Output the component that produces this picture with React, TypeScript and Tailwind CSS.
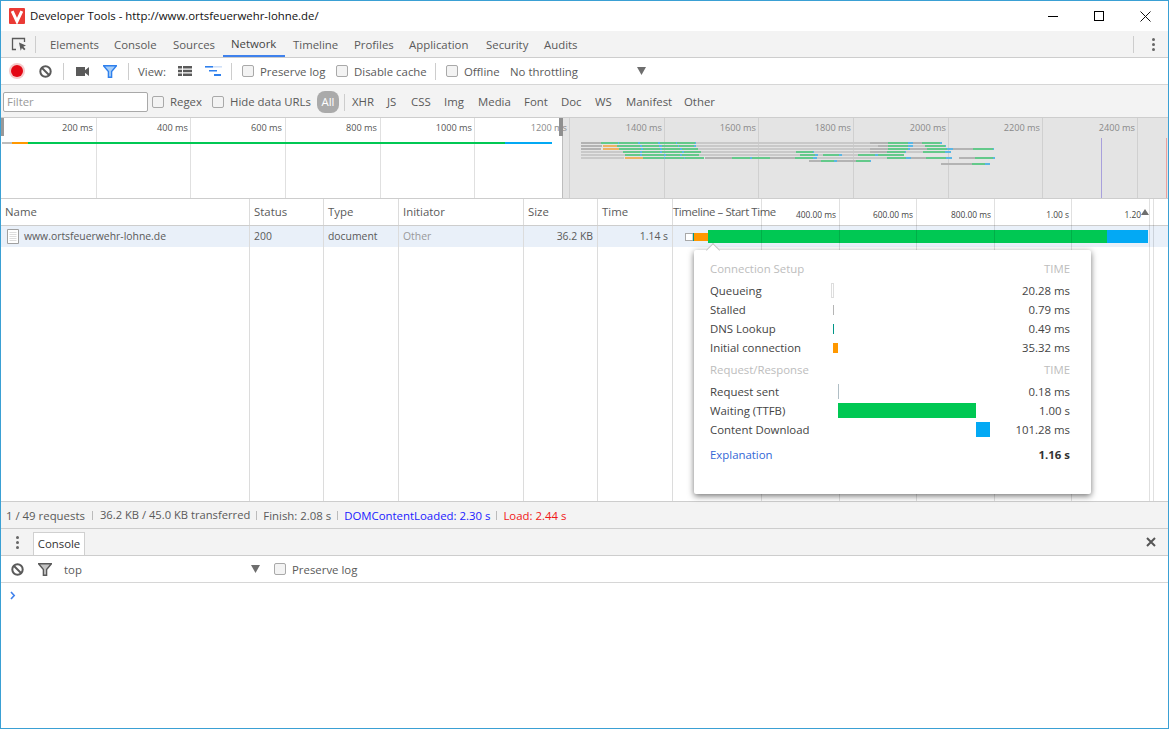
import type { ReactNode } from "react"

const mainTabs: [string, string][] = [
  ["Elements", "w-[64px]"],
  ["Console", "w-[59px]"],
  ["Sources", "w-[58px]"],
  ["Network", "w-[62px]"],
  ["Timeline", "w-[61px]"],
  ["Profiles", "w-[55px]"],
  ["Application", "w-[77px]"],
  ["Security", "w-[58px]"],
  ["Audits", "w-[58px]"],
]

const typeFilters: [string, string][] = [
  ["XHR", "w-[35px]"],
  ["JS", "w-[24px]"],
  ["CSS", "w-[33px]"],
  ["Img", "w-[34px]"],
  ["Media", "w-[46px]"],
  ["Font", "w-[37px]"],
  ["Doc", "w-[34px]"],
  ["WS", "w-[31px]"],
  ["Manifest", "w-[58px]"],
  ["Other", "w-[45px]"],
]

const overviewLabels = [
  ["200 ms", 92], ["400 ms", 187], ["600 ms", 281], ["800 ms", 376], ["1000 ms", 471], ["1200 ms", 566],
  ["1400 ms", 661], ["1600 ms", 755], ["1800 ms", 850], ["2000 ms", 945], ["2200 ms", 1039], ["2400 ms", 1134],
] as const

const overviewLines = [96, 190, 285, 380, 474, 569, 664, 758, 853, 948, 1042, 1137]

const g = "#b3b3b3"
const l = "#c9c9c9"
const G = "#63c98a"
const b = "#5ab6e4"
const o = "#ecb262"

// [colour, from, to] per waterfall row, in page pixels
const overviewRows: [string, number, number][][] = [
  [[g, 581, 601], [G, 601, 618], [b, 618, 619], [G, 619, 638], [b, 638, 640], [G, 640, 658], [b, 658, 660], [G, 660, 676], [b, 676, 677], [G, 677, 695], [b, 695, 696], [l, 696, 870], [g, 870, 888], [G, 888, 908], [b, 908, 913], [g, 913, 922], [G, 922, 940], [b, 940, 942]],
  [[g, 581, 602], [o, 603, 617], [G, 617, 640], [b, 640, 642], [G, 642, 659], [b, 659, 662], [G, 662, 678], [b, 678, 679], [G, 679, 694], [b, 694, 696], [l, 696, 878], [g, 878, 888], [G, 888, 908], [b, 908, 913], [l, 913, 925], [G, 925, 945], [b, 945, 946]],
  [[g, 581, 601], [o, 603, 619], [G, 619, 641], [b, 641, 643], [G, 643, 660], [b, 660, 662], [G, 662, 680], [b, 680, 682], [G, 682, 698], [l, 698, 870], [g, 870, 888], [G, 888, 908], [b, 908, 910], [g, 910, 927], [G, 927, 947], [b, 947, 953], [g, 953, 973], [G, 973, 993], [b, 993, 994]],
  [[l, 581, 623], [G, 623, 640], [b, 640, 642], [G, 642, 660], [b, 660, 662], [G, 662, 682], [b, 682, 684], [G, 684, 701], [l, 701, 796], [G, 796, 813], [b, 813, 814], [l, 814, 870], [g, 870, 887], [G, 887, 905], [b, 905, 906], [l, 906, 923], [G, 923, 945], [b, 945, 951]],
  [[l, 581, 625], [G, 625, 640], [b, 640, 642], [G, 642, 664], [b, 664, 666], [G, 666, 680], [b, 680, 682], [G, 682, 699], [l, 699, 800], [G, 800, 815], [b, 815, 818], [l, 818, 823], [G, 823, 839], [b, 839, 842], [l, 842, 858], [G, 858, 875], [b, 875, 878], [G, 878, 904]],
  [[l, 581, 624], [o, 625, 643], [G, 643, 664], [b, 664, 665], [G, 665, 684], [b, 684, 685], [G, 685, 704], [g, 705, 732], [G, 732, 750], [b, 750, 752], [G, 752, 770], [g, 770, 795], [G, 795, 813], [b, 813, 817], [l, 817, 887], [G, 887, 906], [b, 906, 911], [g, 911, 926], [G, 926, 946], [b, 946, 952], [g, 959, 975], [G, 975, 993], [b, 993, 995]],
  [[g, 809, 821], [G, 821, 834], [b, 834, 837], [g, 837, 856], [G, 856, 870], [b, 870, 871]],
  [[g, 941, 972], [G, 972, 985], [b, 985, 990]],
]

const rulerLabels = [
  ["400.00 ms", 835], ["600.00 ms", 912], ["800.00 ms", 990], ["1.00 s", 1068], ["1.20", 1140],
] as const

const rulerLines = [761, 839, 916, 994, 1071, 1149, 1153]

function Chk() {
  return <span className="block w-[12px] h-[12px] shrink-0 rounded-[2px] border border-[#a9a9a9] bg-[#f3f3f3]" />
}

function Sep({ className }: { className: string }) {
  return <span className={"block w-px h-[17px] shrink-0 bg-[#cdcdcd] " + className} />
}

function BlockIcon() {
  return (
    <svg width="13" height="13" viewBox="0 0 13 13" className="shrink-0">
      <circle cx="6.5" cy="6.5" r="5.2" fill="none" stroke="#5a5a5a" strokeWidth="2" />
      <path d="M3 3l7 7" stroke="#5a5a5a" strokeWidth="2" />
    </svg>
  )
}

function Arrow() {
  return (
    <svg width="9" height="8" viewBox="0 0 9 8" className="shrink-0">
      <path d="M0 0h9L4.5 8z" fill="#6e6e6e" />
    </svg>
  )
}

function TitleBar() {
  return (
    <div className="flex items-center h-[30px] shrink-0 bg-white text-[#111]">
      <svg width="16" height="16" viewBox="0 0 16 16" className="ml-[8px] shrink-0">
        <rect width="16" height="16" rx="1" fill="#ea3a35" />
        <path d="M3.2 3.2l4.8 10.2 4.8-10.2" fill="none" stroke="#fff" strokeWidth="3" />
      </svg>
      <span className="ml-[5px] text-[11.4px] whitespace-nowrap">Developer Tools - http://www.ortsfeuerwehr-lohne.de/</span>
      <div className="ml-auto flex items-center">
        <div className="w-[46px] h-[30px] flex items-center justify-center">
          <span className="block w-[10px] h-px bg-black" />
        </div>
        <div className="w-[46px] h-[30px] flex items-center justify-center">
          <span className="block w-[10px] h-[10px] border border-black" />
        </div>
        <div className="w-[46px] h-[30px] flex items-center justify-center">
          <svg width="11" height="11" viewBox="0 0 11 11">
            <path d="M.5.5l10 10M10.5.5l-10 10" stroke="#111" strokeWidth="1" />
          </svg>
        </div>
      </div>
    </div>
  )
}

function MainTabs() {
  return (
    <div className="flex items-center h-[27px] shrink-0 bg-[#f3f3f3] border-b border-[#cdcdcd]">
      <div className="w-[34px] flex justify-center">
        <svg width="16" height="16" viewBox="0 0 16 16" className="ml-[2px]">
          <path d="M5 13.5H1.5v-11h12V6" fill="none" stroke="#5a5a5a" strokeWidth="1.3" />
          <path d="M8 6.5l7 3-2.7 1.2 2.2 2.3-1.3 1.3-2.3-2.2-1.2 2.7z" fill="#5a5a5a" />
        </svg>
      </div>
      <Sep className="" />
      <div className="ml-[6px] flex h-full">
        {mainTabs.map(([name, width]) => (
          <div
            key={name}
            className={
              "h-[26px] pl-[8px] pt-[2px] flex items-center text-[11.4px] whitespace-nowrap " +
              width +
              (name === "Network" ? " border-b-2 border-[#3f81ec] text-[#444]" : " text-[#5a5a5a]")
            }
          >
            {name}
          </div>
        ))}
      </div>
      <Sep className="ml-auto mr-[18px]" />
      <div className="mr-[13px] flex flex-col gap-[2px]">
        <span className="block w-[3px] h-[3px] rounded-full bg-[#666]" />
        <span className="block w-[3px] h-[3px] rounded-full bg-[#666]" />
        <span className="block w-[3px] h-[3px] rounded-full bg-[#666]" />
      </div>
    </div>
  )
}

function NetworkToolbar() {
  return (
    <div className="flex items-center h-[27px] shrink-0 bg-white border-b border-[#d6d6d6] text-[11.4px] text-[#5a5a5a] whitespace-nowrap">
      <svg width="16" height="16" viewBox="0 0 16 16" className="ml-[8px] shrink-0">
        <circle cx="8" cy="8" r="8" fill="#f6c9c9" />
        <circle cx="8" cy="8" r="6" fill="#e30613" />
      </svg>
      <span className="ml-[14px] block">
        <BlockIcon />
      </span>
      <Sep className="ml-[11px]" />
      <svg width="13" height="9" viewBox="0 0 13 9" className="ml-[12px] shrink-0">
        <path d="M0 0h9v9H0zM9 3.2L13 0v9L9 5.8z" fill="#5a5a5a" />
      </svg>
      <svg width="14" height="13" viewBox="0 0 14 13" className="ml-[14px] shrink-0">
        <path d="M.5.8h13L8.6 6.6v5.6H5.4V6.6z" fill="#a6cdf7" stroke="#2f80ed" strokeWidth="1.4" />
      </svg>
      <Sep className="ml-[11px]" />
      <span className="ml-[9px] w-[40px] pt-[2px]">View:</span>
      <svg width="14" height="10" viewBox="0 0 14 10" className="shrink-0">
        <path d="M0 0h4v2.6H0zM5 0h9v2.6H5zM0 3.7h4v2.6H0zM5 3.7h9v2.6H5zM0 7.4h4V10H0zM5 7.4h9V10H5z" fill="#5a5a5a" />
      </svg>
      <svg width="17" height="11" viewBox="0 0 17 11" className="ml-[13px] shrink-0">
        <path d="M0 0h8v1.6H0z" fill="#2f80ed" />
        <path d="M8 0h9v1.6H8z" fill="#cfe0f8" />
        <path d="M4 4h8v1.6H4zM9 8h7v2H9z" fill="#2f80ed" />
      </svg>
      <Sep className="ml-[9px]" />
      <span className="ml-[10px] block">
        <Chk />
      </span>
      <span className="ml-[6px] w-[76px] pt-[2px]">Preserve log</span>
      <Chk />
      <span className="ml-[6px] w-[81px] pt-[2px]">Disable cache</span>
      <Sep className="" />
      <span className="ml-[10px] block">
        <Chk />
      </span>
      <span className="ml-[6px] w-[46px] pt-[2px]">Offline</span>
      <span className="w-[127px] pt-[2px]">No throttling</span>
      <Arrow />
    </div>
  )
}

function FilterBar() {
  return (
    <div className="flex items-center h-[33px] shrink-0 pt-[2px] bg-[#f3f3f3] border-b border-[#cdcdcd] text-[11.4px] text-[#5a5a5a] whitespace-nowrap">
      <div className="ml-[2px] w-[145px] h-[20px] flex items-center px-[3px] bg-white border border-[#a9a9a9] rounded-[2px] text-[#9a9a9a]">
        Filter
      </div>
      <span className="ml-[4px] block">
        <Chk />
      </span>
      <span className="ml-[6px] w-[42px]">Regex</span>
      <Chk />
      <span className="ml-[6px] w-[87px]">Hide data URLs</span>
      <span className="w-[22px] h-[22px] rounded-[8px] bg-[#aaaaaa] text-white flex items-center justify-center">All</span>
      <Sep className="ml-[5px]" />
      <div className="ml-[7px] flex">
        {typeFilters.map(([name, width]) => (
          <span key={name} className={"block " + width}>
            {name}
          </span>
        ))}
      </div>
    </div>
  )
}

function Overview() {
  return (
    <div className="relative flex h-[81px] shrink-0 border-b border-[#cdcdcd] text-[9.2px] whitespace-nowrap">
      <div className="w-[561px] bg-white" />
      <div className="flex-1 bg-[#e4e4e4]" />
      <svg width="1167" height="80" viewBox="1 118 1167 80" className="absolute left-0 top-0">
        {overviewLines.map((x) => (
          <rect key={x} x={x} y={118} width="1" height="80" fill={x < 561 ? "#e0e0e0" : "#d0d0d0"} />
        ))}
        <rect x="2" y="142" width="10" height="2" fill="#bdbdbd" />
        <rect x="12" y="142" width="16" height="2" fill="#ff9800" />
        <rect x="28" y="142" width="477" height="2" fill="#00c853" />
        <rect x="505" y="142" width="47" height="2" fill="#03a9f4" />
        {overviewRows.map((row, i) =>
          row.map(([fill, from, to]) => (
            <rect key={i + "-" + from} x={from} y={142 + i * 3} width={to - from} height="2" fill={fill} />
          )),
        )}
        <rect x="1101" y="138" width="1" height="60" fill="#a8a0dc" />
        <rect x="1166" y="138" width="1" height="60" fill="#e9a0a0" />
        <rect x="562" y="118" width="1" height="80" fill="#bdbdbd" />
      </svg>
      {overviewLabels.map(([label, x]) => (
        <span
          key={label}
          className={x < 561 ? "absolute top-[3px] text-[#555]" : "absolute top-[3px] text-[#8a8a8a]"}
          style={{ right: 1167 - x }}
        >
          {label}
        </span>
      ))}
      <span className="absolute left-0 top-0 w-[3px] h-[18px] bg-[#999]" />
      <span className="absolute left-[558px] top-0 w-[4px] h-[18px] bg-[#8f8f8f]" />
    </div>
  )
}

function Cells({ className, children }: { className: string; children: ReactNode }) {
  return <div className={"grid grid-cols-[249px_74px_75px_125px_74px_75px_1fr] " + className}>{children}</div>
}

function Cell({ className, children }: { className?: string; children?: ReactNode }) {
  return <div className={"flex items-center border-r border-[#dcdcdc] px-[4px] " + (className ?? "")}>{children}</div>
}

function Row({ label, value, bar }: { label: string; value: string; bar: string }) {
  return (
    <div className="flex items-center h-[19px] text-[11.4px] text-[#444]">
      <span className="w-[121px] whitespace-nowrap">{label}</span>
      <div className="flex-1 flex items-center">
        <span className={"block " + bar} />
      </div>
      <span className="whitespace-nowrap">{value}</span>
    </div>
  )
}

function Heading({ title, className }: { title: string; className: string }) {
  return (
    <div className={"flex justify-between h-[19px] items-center text-[11.4px] text-[#bdbdbd] " + className}>
      <span>{title}</span>
      <span>TIME</span>
    </div>
  )
}

function TimingPopover() {
  return (
    <div className="absolute left-[693px] top-[51px] w-[397px] h-[244px] bg-white rounded-[2px] shadow-[0_2px_6px_rgba(0,0,0,0.55)] pl-[16px] pr-[21px] pt-[9px]">
      <span className="absolute left-[14px] top-[-5px] w-[10px] h-[10px] rotate-45 bg-white border-t border-l border-[#c4c4c4]" />
      <Heading title="Connection Setup" className="" />
      <div className="mt-[3px]">
        <Row label="Queueing" value="20.28 ms" bar="w-[3px] h-[15px] border border-[#dddddd] bg-white" />
        <Row label="Stalled" value="0.79 ms" bar="ml-[2px] w-px h-[10px] bg-[#b5b5b5]" />
        <Row label="DNS Lookup" value="0.49 ms" bar="ml-[2px] w-px h-[10px] bg-[#009688]" />
        <Row label="Initial connection" value="35.32 ms" bar="ml-[2px] w-[5px] h-[10px] bg-[#ff9800]" />
      </div>
      <Heading title="Request/Response" className="mt-[3px]" />
      <div className="mt-[3px]">
        <Row label="Request sent" value="0.18 ms" bar="ml-[7px] w-px h-[15px] bg-[#b0bec5]" />
        <Row label="Waiting (TTFB)" value="1.00 s" bar="ml-[7px] w-[138px] h-[15px] bg-[#00c853]" />
        <Row label="Content Download" value="101.28 ms" bar="ml-[145px] w-[14px] h-[15px] bg-[#03a9f4]" />
      </div>
      <div className="mt-[6px] flex justify-between items-center h-[19px] text-[11.4px]">
        <span className="text-[#3367d6]">Explanation</span>
        <span className="font-bold text-[#333]">1.16 s</span>
      </div>
    </div>
  )
}

function RequestTable() {
  return (
    <div className="relative h-[302px] shrink-0 flex flex-col bg-white text-[11.4px] text-[#5a5a5a] whitespace-nowrap">
      <Cells className="h-[27px] shrink-0 border-b border-[#cdcdcd]">
        <Cell>Name</Cell>
        <Cell>Status</Cell>
        <Cell>Type</Cell>
        <Cell>Initiator</Cell>
        <Cell>Size</Cell>
        <Cell>Time</Cell>
        <div className="flex items-center tracking-[-0.4px]">Timeline – Start Time</div>
      </Cells>
      <Cells className="h-[21px] shrink-0 bg-[#e9f0f9] text-[10.4px]">
        <Cell>
          <svg width="12" height="15" viewBox="0 0 12 15" className="ml-[2px] mr-[5px] shrink-0">
            <path d="M.5.5h11v14H.5z" fill="#fff" stroke="#a0a0a0" />
            <path d="M2.5 3.5h7M2.5 5.5h7M2.5 7.5h7M2.5 9.5h7M2.5 11.5h7" stroke="#dddddd" />
          </svg>
          www.ortsfeuerwehr-lohne.de
        </Cell>
        <Cell>200</Cell>
        <Cell>document</Cell>
        <Cell className="text-[#999]">Other</Cell>
        <Cell className="justify-end">36.2 KB</Cell>
        <Cell className="justify-end">1.14 s</Cell>
        <div />
      </Cells>
      <Cells className="flex-1">
        <Cell />
        <Cell />
        <Cell />
        <Cell />
        <Cell />
        <Cell />
        <div />
      </Cells>
      <svg width="1167" height="302" viewBox="1 199 1167 302" className="absolute left-0 top-0">
        <rect x="685.5" y="233.5" width="7.5" height="7" fill="#fff" stroke="#a8a8a8" />
        <rect x="693" y="233" width="1" height="8" fill="#009688" />
        <rect x="694" y="233" width="14" height="8" fill="#ff9800" />
        <rect x="708" y="230" width="399" height="13" fill="#00c853" />
        <rect x="1107" y="230" width="41" height="13" fill="#03a9f4" />
        {rulerLines.map((x) => (
          <rect key={x} x={x} y={199} width="1" height="302" fill="rgba(0,0,0,0.12)" />
        ))}
        <path d="M1141 215l4-6 4 6z" fill="#6e6e6e" />
      </svg>
      {rulerLabels.map(([label, x]) => (
        <span key={label} className="absolute top-[10px] text-[8.4px] text-[#444]" style={{ right: 1167 - x }}>
          {label}
        </span>
      ))}
      <TimingPopover />
    </div>
  )
}

function StatusBar() {
  return (
    <div className="flex items-center h-[28px] shrink-0 pt-[1px] bg-[#f3f3f3] border-y border-[#cdcdcd] pl-[5px] text-[11.4px] text-[#5a5a5a] whitespace-nowrap">
      <span>1 / 49 requests</span>
      <span className="mx-[7px] w-px h-[9px] bg-[#bbb]" />
      <span className="text-[11.2px]">36.2 KB / 45.0 KB transferred</span>
      <span className="mx-[6px] w-px h-[9px] bg-[#bbb]" />
      <span>Finish: 2.08 s</span>
      <span className="mx-[6px] w-px h-[9px] bg-[#bbb]" />
      <span className="text-[#1a1aff]">DOMContentLoaded: 2.30 s</span>
      <span className="mx-[6px] w-px h-[9px] bg-[#bbb]" />
      <span className="text-[#f01818]">Load: 2.44 s</span>
    </div>
  )
}

function ConsoleDrawer() {
  return (
    <>
      <div className="flex items-end h-[27px] shrink-0 bg-[#f3f3f3] border-b border-[#cdcdcd] text-[11.4px] text-[#333]">
        <div className="self-center ml-[15px] w-[3px] flex flex-col gap-[2px]">
          <span className="block w-[3px] h-[3px] rounded-full bg-[#666]" />
          <span className="block w-[3px] h-[3px] rounded-full bg-[#666]" />
          <span className="block w-[3px] h-[3px] rounded-full bg-[#666]" />
        </div>
        <div className="ml-[14px] w-[52px] h-[23px] flex items-center justify-center bg-white border-x border-t border-[#d0d0d0]">
          Console
        </div>
        <svg width="10" height="10" viewBox="0 0 10 10" className="self-center ml-auto mr-[12px]">
          <path d="M1 1l8 8M9 1L1 9" stroke="#555" strokeWidth="2" />
        </svg>
      </div>
      <div className="flex items-center h-[27px] shrink-0 bg-white border-b border-[#d6d6d6] text-[11.4px] text-[#5a5a5a]">
        <span className="ml-[10px] block">
          <BlockIcon />
        </span>
        <svg width="14" height="13" viewBox="0 0 14 13" className="ml-[14px] shrink-0">
          <path d="M.6.8h12.8L8.6 6.6v5.6H5.4V6.6z" fill="#c4c4c4" stroke="#5a5a5a" strokeWidth="1.4" />
        </svg>
        <span className="ml-[12px] w-[187px] pt-[2px]">top</span>
        <Arrow />
        <span className="ml-[14px] block">
          <Chk />
        </span>
        <span className="ml-[6px] pt-[2px] whitespace-nowrap">Preserve log</span>
      </div>
      <div className="flex-1 bg-white pl-[9px] pt-[8px]">
        <svg width="6" height="9" viewBox="0 0 6 9">
          <path d="M1 1l3.2 3.5L1 8" fill="none" stroke="#3f81ec" strokeWidth="1.6" />
        </svg>
      </div>
    </>
  )
}

export default function App() {
  return (
    <div className="w-[1169px] h-[729px] flex flex-col overflow-hidden border border-[#3aa0d4] bg-white font-['Open_Sans',sans-serif]">
      <TitleBar />
      <MainTabs />
      <NetworkToolbar />
      <FilterBar />
      <Overview />
      <RequestTable />
      <StatusBar />
      <ConsoleDrawer />
    </div>
  )
}
